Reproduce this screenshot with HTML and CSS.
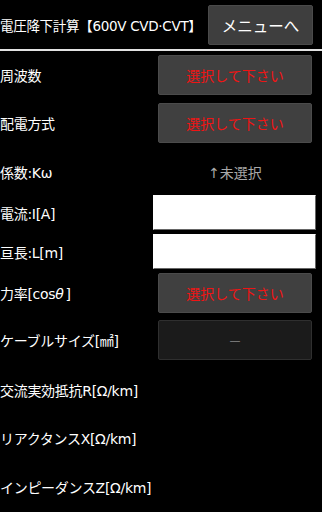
FILE: index.html
```html
<html>
<head>
	<title>電圧降下計算</title>
	<link rel="stylesheet" href="styles.css">
</head>
<body>
<div class="head">
	<div class="title">電圧降下計算【600V CVD·CVT】</div>
	<div class="menu">メニューへ</div>
</div>
<div class="rule"></div>

<div class="row">
	<div class="label">周波数</div>
	<div class="btn">選択して下さい</div>
</div>
<div class="row">
	<div class="label">配電方式</div>
	<div class="btn">選択して下さい</div>
</div>
<div class="row k">
	<div class="label">係数:Kω</div>
	<div class="note">↑未選択</div>
</div>
<div class="row in">
	<div class="label">電流:I[A]</div>
	<input class="box" type="text">
</div>
<div class="row in">
	<div class="label">亘長:L[m]</div>
	<input class="box" type="text">
</div>
<div class="row pf">
	<div class="label">力率[cos<i>θ</i>]</div>
	<div class="btn">選択して下さい</div>
</div>
<div class="row cab">
	<div class="label">ケーブルサイズ[㎟]</div>
	<div class="btn off">—</div>
</div>
<div class="row">
	<div class="label">交流実効抵抗R[Ω/km]</div>
</div>
<div class="row">
	<div class="label">リアクタンスX[Ω/km]</div>
</div>
<div class="row last">
	<div class="label">インピーダンスZ[Ω/km]</div>
</div>
</body>
</html>
```
FILE: styles.css
```css
body {margin:0; background:#000; color:#fff; font-family:"DejaVu Sans","Noto Sans CJK JP",sans-serif; width:322px; height:512px; overflow:hidden}
div.head {display:flex; align-items:center; justify-content:space-between; height:49px}
div.title {font-size:13.5px; letter-spacing:-0.3px; white-space:nowrap}
div.menu {width:105px; height:40px; margin-right:9px; box-sizing:border-box; background:#3e3e3e; border:1px solid #4a4a4a; border-radius:2px; display:flex; align-items:center; justify-content:center; font-size:15.5px}
div.rule {height:2px; background:#e2e2e2}
div.row {display:flex; align-items:center; justify-content:space-between; height:48px; box-sizing:border-box}
div.row.k {height:46px; padding-top:4px}
div.row.in {height:39px}
div.row.pf {height:43px}
div.row.cab {height:52px}
div.row.last {height:50px}
div.label {font-size:14px; white-space:nowrap; letter-spacing:-0.3px}
div.label i {font-style:italic; padding-right:2px}
div.btn {width:154px; height:40px; margin-right:10px; box-sizing:border-box; background:#404040; border:1px solid #4b4b4b; border-radius:2px; display:flex; align-items:center; justify-content:center; font-size:14px; color:#f01414}
div.btn.off {background:#1b1b1b; border-color:#2f2f2f; color:#8a8a8a; font-size:11px}
div.note {width:154px; margin-right:10px; text-align:center; font-size:14px; color:#a8a8a8}
input.box {width:163px; height:35px; margin:0 6px 0 0; box-sizing:border-box; background:#fff; border:1px solid #fff; border-right-color:#666; border-bottom-color:#666; outline:none}
```
